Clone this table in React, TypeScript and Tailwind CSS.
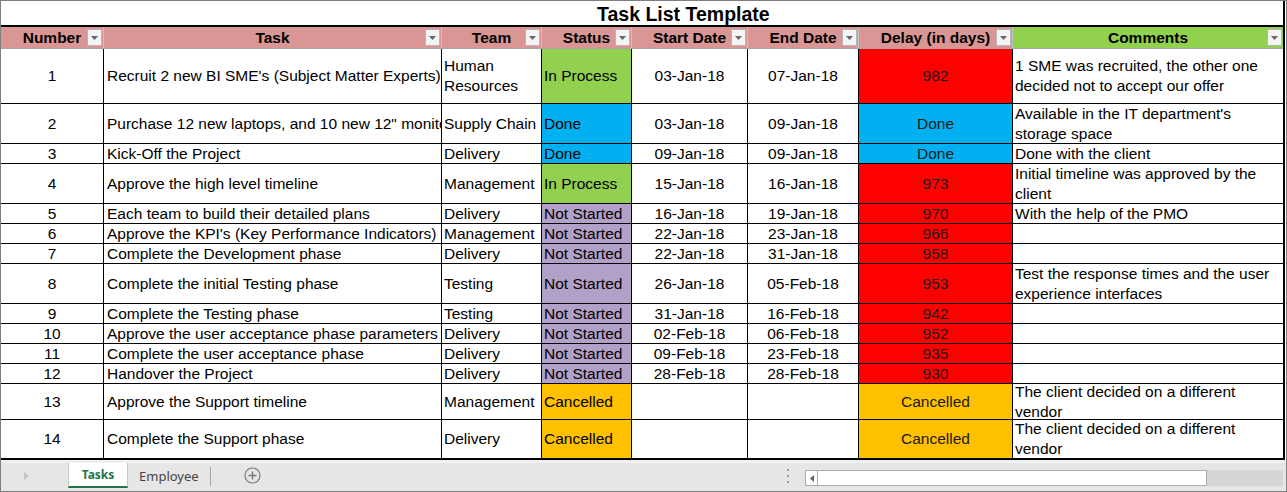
import React from "react";

type Row = {
  n: number;
  task: string;
  team: string;
  status: "In Process" | "Done" | "Not Started" | "Cancelled";
  start: string;
  end: string;
  delay: string;
  comment: string;
  h: string;
};

const rows: Row[] = [
  { n: 1, task: "Recruit 2 new BI SME's (Subject Matter Experts)", team: "Human Resources", status: "In Process", start: "03-Jan-18", end: "07-Jan-18", delay: "982", comment: "1 SME was recruited, the other one decided not to accept our offer", h: "h-[55px]" },
  { n: 2, task: 'Purchase 12 new laptops, and 10 new 12" monitors', team: "Supply Chain", status: "Done", start: "03-Jan-18", end: "09-Jan-18", delay: "Done", comment: "Available in the IT department's storage space", h: "h-[40px]" },
  { n: 3, task: "Kick-Off the Project", team: "Delivery", status: "Done", start: "09-Jan-18", end: "09-Jan-18", delay: "Done", comment: "Done with the client", h: "h-[20px]" },
  { n: 4, task: "Approve the high level timeline", team: "Management", status: "In Process", start: "15-Jan-18", end: "16-Jan-18", delay: "973", comment: "Initial timeline was approved by the client", h: "h-[40px]" },
  { n: 5, task: "Each team to build their detailed plans", team: "Delivery", status: "Not Started", start: "16-Jan-18", end: "19-Jan-18", delay: "970", comment: "With the help of the PMO", h: "h-[20px]" },
  { n: 6, task: "Approve the KPI's (Key Performance Indicators)", team: "Management", status: "Not Started", start: "22-Jan-18", end: "23-Jan-18", delay: "966", comment: "", h: "h-[20px]" },
  { n: 7, task: "Complete the Development phase", team: "Delivery", status: "Not Started", start: "22-Jan-18", end: "31-Jan-18", delay: "958", comment: "", h: "h-[20px]" },
  { n: 8, task: "Complete the initial Testing phase", team: "Testing", status: "Not Started", start: "26-Jan-18", end: "05-Feb-18", delay: "953", comment: "Test the response times and the user experience interfaces", h: "h-[40px]" },
  { n: 9, task: "Complete the Testing phase", team: "Testing", status: "Not Started", start: "31-Jan-18", end: "16-Feb-18", delay: "942", comment: "", h: "h-[20px]" },
  { n: 10, task: "Approve the user acceptance phase parameters", team: "Delivery", status: "Not Started", start: "02-Feb-18", end: "06-Feb-18", delay: "952", comment: "", h: "h-[20px]" },
  { n: 11, task: "Complete the user acceptance phase", team: "Delivery", status: "Not Started", start: "09-Feb-18", end: "23-Feb-18", delay: "935", comment: "", h: "h-[20px]" },
  { n: 12, task: "Handover the Project", team: "Delivery", status: "Not Started", start: "28-Feb-18", end: "28-Feb-18", delay: "930", comment: "", h: "h-[20px]" },
  { n: 13, task: "Approve the Support timeline", team: "Management", status: "Cancelled", start: "", end: "", delay: "Cancelled", comment: "The client decided on a different vendor", h: "h-[36px]" },
  { n: 14, task: "Complete the Support phase", team: "Delivery", status: "Cancelled", start: "", end: "", delay: "Cancelled", comment: "The client decided on a different vendor", h: "h-[38px]" },
];

const statusBg: Record<Row["status"], string> = {
  "In Process": "bg-[#92d050]",
  Done: "bg-[#00b0f0]",
  "Not Started": "bg-[#b1a0c7]",
  Cancelled: "bg-[#ffc000]",
};

function delayBg(r: Row) {
  if (r.delay === "Done") return "bg-[#00b0f0]";
  if (r.delay === "Cancelled") return "bg-[#ffc000]";
  return "bg-[#ff0000]";
}

const cols = "grid grid-cols-[103px_338px_100px_90px_116px_111px_154px_270px]";

function FilterButton() {
  return (
    <span className="absolute right-[1px] top-[2px] flex h-[17px] w-[15px] items-center justify-center border border-[#b7b7b7] bg-[#f4f4f4]">
      <svg width="7" height="4" viewBox="0 0 7 4">
        <path d="M0 0h7L3.5 4z" fill="#666" />
      </svg>
    </span>
  );
}

function HeadCell({ label, green, last }: { label: string; green?: boolean; last?: boolean }) {
  return (
    <div
      className={`relative flex items-center justify-center font-bold ${green ? "bg-[#92d050]" : "bg-[#da9694]"} ${last ? "" : "border-r border-[#c4c4c4]"}`}
    >
      {label}
      <FilterButton />
    </div>
  );
}

export default function App() {
  return (
    <div className="h-[492px] w-[1287px] overflow-hidden border border-[#7f7f7f] bg-white font-['Liberation_Sans',Arial,sans-serif] text-[15.5px] leading-[20px] text-black">
      <div className="w-[1284px] border-r-2 border-black">
        <div className="h-[24px] pl-[596px] pt-[1px] text-[19.5px] font-bold leading-[24px]">Task List Template</div>
        <div className={`${cols} h-[24px] border-t-2 border-b border-t-black border-b-[#a6a6a6]`}>
          <HeadCell label="Number" />
          <HeadCell label="Task" />
          <HeadCell label="Team" />
          <HeadCell label="Status" />
          <HeadCell label="Start Date" />
          <HeadCell label="End Date" />
          <HeadCell label="Delay (in days)" />
          <HeadCell label="Comments" green last />
        </div>
        <div className="border-b-2 border-black">
          {rows.map((r, i) => {
            const b = i === rows.length - 1 ? "" : "border-b border-black";
            const c = `overflow-hidden border-r border-black ${b}`;
            return (
              <div key={r.n} className={`${cols} ${r.h}`}>
                <div className={`${c} flex items-center justify-center`}>{r.n}</div>
                <div className={`${c} flex items-center whitespace-nowrap pl-[3px]`}>{r.task}</div>
                <div className={`${c} flex items-center pl-[2px]`}>{r.team}</div>
                <div className={`${c} ${statusBg[r.status]} flex items-center whitespace-nowrap pl-[2px]`}>{r.status}</div>
                <div className={`${c} flex items-center justify-center`}>{r.start}</div>
                <div className={`${c} flex items-center justify-center`}>{r.end}</div>
                <div className={`${c} ${delayBg(r)} flex items-center justify-center text-[#1a1a1a]`}>{r.delay}</div>
                <div className={`overflow-hidden ${b} flex items-center pl-[2px] pr-[4px]`}>{r.comment}</div>
              </div>
            );
          })}
        </div>
      </div>
      <div className="flex h-[31px] items-start border-t-[3px] border-t-[#f0f0f0] bg-[#e6e6e6] font-['Noto_Sans',sans-serif] text-[13px]">
        <div className="flex h-[25px] w-[67px] items-center pl-[23px]">
          <svg width="5" height="8" viewBox="0 0 5 8">
            <path d="M0 0l5 4-5 4z" fill="#c4c4c4" />
          </svg>
        </div>
        <div className="flex h-[25px] w-[60px] items-center justify-center border-x border-[#c6c6c6] border-b-2 border-b-[#217346] bg-white text-[12px] font-bold text-[#217346]">
          Tasks
        </div>
        <div className="flex h-[25px] w-[82px] items-center pl-[11px] text-[#444]">Employee</div>
        <div className="mt-[4px] h-[19px] w-px bg-[#a6a6a6]" />
        <div className="flex h-[25px] w-[82px] items-center justify-center">
          <svg width="17" height="17" viewBox="0 0 17 17">
            <circle cx="8.5" cy="8.5" r="7.5" fill="none" stroke="#7a7a7a" strokeWidth="1.2" />
            <path d="M8.5 4.5v8M4.5 8.5h8" stroke="#7a7a7a" strokeWidth="1.4" />
          </svg>
        </div>
        <div className="flex-1" />
        <div className="mr-[16px] mt-[6px] flex h-[14px] flex-col justify-between">
          <span className="h-[2px] w-[2px] bg-[#9a9a9a]" />
          <span className="h-[2px] w-[2px] bg-[#9a9a9a]" />
          <span className="h-[2px] w-[2px] bg-[#9a9a9a]" />
        </div>
        <div className="mt-[7px] flex h-[16px] w-[478px]">
          <div className="flex h-[16px] w-[13px] items-center justify-center border border-[#ababab] bg-white">
            <svg width="4" height="7" viewBox="0 0 4 7">
              <path d="M4 0v7L0 3.5z" fill="#606060" />
            </svg>
          </div>
          <div className="h-[16px] w-[389px] border border-l-0 border-[#ababab] bg-white" />
          <div className="h-[16px] flex-1 bg-[#d6d6d6]" />
        </div>
        <div className="w-[3px]" />
      </div>
    </div>
  );
}
